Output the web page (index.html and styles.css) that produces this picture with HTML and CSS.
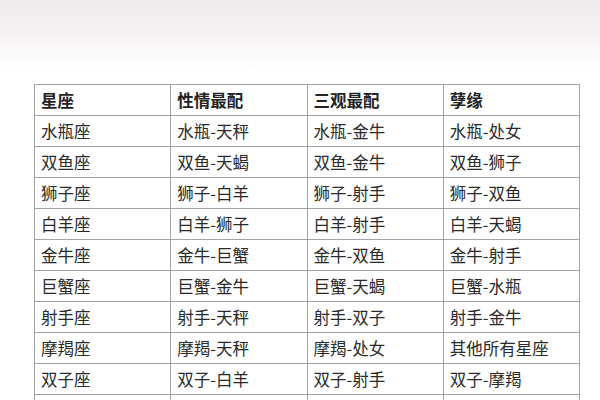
FILE: index.html
```html
<!DOCTYPE html>
<html lang="zh">
<head>
<meta charset="utf-8">
<link rel="stylesheet" href="styles.css">
</head>
<body>
<div class="top"></div>
<table class="grid">
  <colgroup><col class="c"><col class="c"><col class="c"><col class="c"></colgroup>
  <tr class="head"><td>星座</td><td>性情最配</td><td>三观最配</td><td>孽缘</td></tr>
  <tr><td>水瓶座</td><td>水瓶-天秤</td><td>水瓶-金牛</td><td>水瓶-处女</td></tr>
  <tr><td>双鱼座</td><td>双鱼-天蝎</td><td>双鱼-金牛</td><td>双鱼-狮子</td></tr>
  <tr><td>狮子座</td><td>狮子-白羊</td><td>狮子-射手</td><td>狮子-双鱼</td></tr>
  <tr><td>白羊座</td><td>白羊-狮子</td><td>白羊-射手</td><td>白羊-天蝎</td></tr>
  <tr><td>金牛座</td><td>金牛-巨蟹</td><td>金牛-双鱼</td><td>金牛-射手</td></tr>
  <tr><td>巨蟹座</td><td>巨蟹-金牛</td><td>巨蟹-天蝎</td><td>巨蟹-水瓶</td></tr>
  <tr><td>射手座</td><td>射手-天秤</td><td>射手-双子</td><td>射手-金牛</td></tr>
  <tr><td>摩羯座</td><td>摩羯-天秤</td><td>摩羯-处女</td><td>其他所有星座</td></tr>
  <tr><td>双子座</td><td>双子-白羊</td><td>双子-射手</td><td>双子-摩羯</td></tr>
  <tr><td>天蝎座</td><td>天蝎-巨蟹</td><td>天蝎-巨蟹</td><td>天蝎-白羊</td></tr>
</table>
</body>
</html>
```
FILE: styles.css
```css
html, body {
  margin: 0;
  padding: 0;
  background: #ffffff;
  overflow: hidden;
  height: 400px;
}
.top {
  height: 84px;
  background: linear-gradient(to bottom, #f0eaec 0px, #f4f0f1 30px, #fbfafa 55px, #ffffff 70px, #ffffff 84px);
}
.grid {
  margin-left: 34px;
  border-collapse: collapse;
  table-layout: fixed;
  width: 545px;
  font-family: "Noto Sans CJK SC", "Noto Sans", sans-serif;
  font-size: 16.5px;
  color: #2a2a2a;
}
.grid .c {
  width: 136.25px;
}
.grid tr {
  height: 31px;
}
.grid td {
  border: 1px solid #a3a3a3;
  padding: 0 0 0 6px;
  line-height: 29px;
  white-space: nowrap;
  vertical-align: middle;
}
.head td {
  font-weight: bold;
  color: #222;
}
```
